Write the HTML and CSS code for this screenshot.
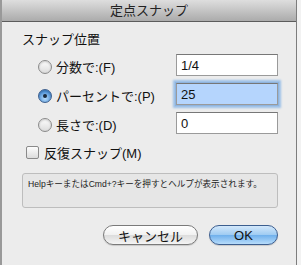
FILE: index.html
```html
<!DOCTYPE html>
<html lang="ja">

<head>
  <meta charset="UTF-8">
  <meta name="viewport" content="width=device-width, initial-scale=1.0">
  <title>定点スナップ</title>

  <link rel="stylesheet" href="styles.css">
</head>

<body>
  <div class="window">
    <div class="titlebar">定点スナップ</div>

    <div class="content">
      <div class="section-title">スナップ位置</div>

      <div class="options">
        <label class="option">
          <span class="radio"></span>
          <span>分数で:(F)</span>
        </label>
        <input class="field" value="1/4">

        <label class="option">
          <span class="radio checked"></span>
          <span>パーセントで:(P)</span>
        </label>
        <input class="field focused" value="25">

        <label class="option">
          <span class="radio"></span>
          <span>長さで:(D)</span>
        </label>
        <input class="field" value="0">
      </div>

      <label class="check-row">
        <span class="checkbox"></span>
        <span>反復スナップ(M)</span>
      </label>

      <div class="help">HelpキーまたはCmd+?キーを押すとヘルプが表示されます。</div>

      <div class="buttons">
        <button class="btn">キャンセル</button>
        <button class="btn default">OK</button>
      </div>
    </div>
  </div>
</body>

</html>
```

FILE: styles.css
```css
body {
  margin: 0;
  background: #f2f2f2;
  font-family: "Liberation Sans", "Noto Sans CJK JP", sans-serif;
  font-size: 13px;
  color: #111;
}

.window {
  width: 297px;
  height: 265px;
  box-sizing: border-box;
  background: #ececec;
  border-left: 2px solid #999;
  border-right: 1px solid #7d7d7d;
}

.titlebar {
  height: 21px;
  line-height: 22px;
  text-align: center;
  font-size: 13px;
  color: #222;
  background: linear-gradient(#dedede, #ababab);
  border-bottom: 1px solid #5c5c5c;
}

.content {
  padding: 10px 18px 0 20px;
}

.section-title {
  line-height: 16px;
  margin-bottom: 6px;
}

.options {
  display: grid;
  grid-template-columns: 1fr 102px;
  grid-auto-rows: 22px;
  row-gap: 7px;
}

.option {
  display: flex;
  align-items: center;
  padding-left: 16px;
  padding-top: 3px;
  white-space: nowrap;
}

.radio {
  width: 12px;
  height: 12px;
  border: 1px solid #8a8a8a;
  border-radius: 50%;
  background: linear-gradient(#fdfdfd, #dcdcdc);
  box-shadow: inset 0 1px 2px rgba(0, 0, 0, 0.2);
  margin-right: 4px;
  position: relative;
}

.radio.checked {
  border-color: #3d5f8e;
  background: radial-gradient(circle at 50% 70%, #b7dcfb, #4a8fd6 70%);
}

.radio.checked::after {
  content: "";
  position: absolute;
  left: 4px;
  top: 4px;
  width: 4px;
  height: 4px;
  border-radius: 50%;
  background: #1a2a3c;
}

.field {
  box-sizing: border-box;
  width: 102px;
  height: 22px;
  margin: 0;
  padding: 1px 4px 0;
  border: 1px solid #9a9a9a;
  border-top-color: #777;
  background: #fff;
  font-family: inherit;
  font-size: 13px;
  color: #111;
  outline: none;
}

.field.focused {
  background: #b5d5fd;
  box-shadow: 0 0 0 1px #8fb4de, 0 0 2px 3px #9cc0e8;
}

.check-row {
  display: flex;
  align-items: center;
  height: 16px;
  margin-top: 10px;
  padding-left: 4px;
}

.checkbox {
  width: 11px;
  height: 11px;
  border: 1px solid #8a8a8a;
  border-radius: 2px;
  background: linear-gradient(#fdfdfd, #dcdcdc);
  margin-right: 5px;
}

.help {
  box-sizing: border-box;
  height: 35px;
  margin-top: 13px;
  padding: 3px 5px;
  border: 1px solid #bdbdbd;
  border-radius: 3px;
  background: #e6e6e6;
  font-size: 8.6px;
  line-height: 14px;
  white-space: nowrap;
  overflow: hidden;
  color: #222;
}

.buttons {
  display: flex;
  justify-content: flex-end;
  column-gap: 11px;
  margin-top: 17px;
}

.btn {
  width: 95px;
  height: 20px;
  padding: 0;
  border: 1px solid #7a7a7a;
  border-radius: 10px;
  background: linear-gradient(#ffffff 0%, #f1f1f1 50%, #dcdcdc 51%, #f4f4f4 100%);
  font-family: inherit;
  font-size: 13px;
  color: #111;
  box-shadow: 0 1px 1px rgba(0, 0, 0, 0.15);
}

.btn.default {
  width: 69px;
  border-color: #3c5e8f;
  background: linear-gradient(#d3e8fb 0%, #9ecbf2 50%, #6fb0ec 51%, #b7dcfb 100%);
}
```
